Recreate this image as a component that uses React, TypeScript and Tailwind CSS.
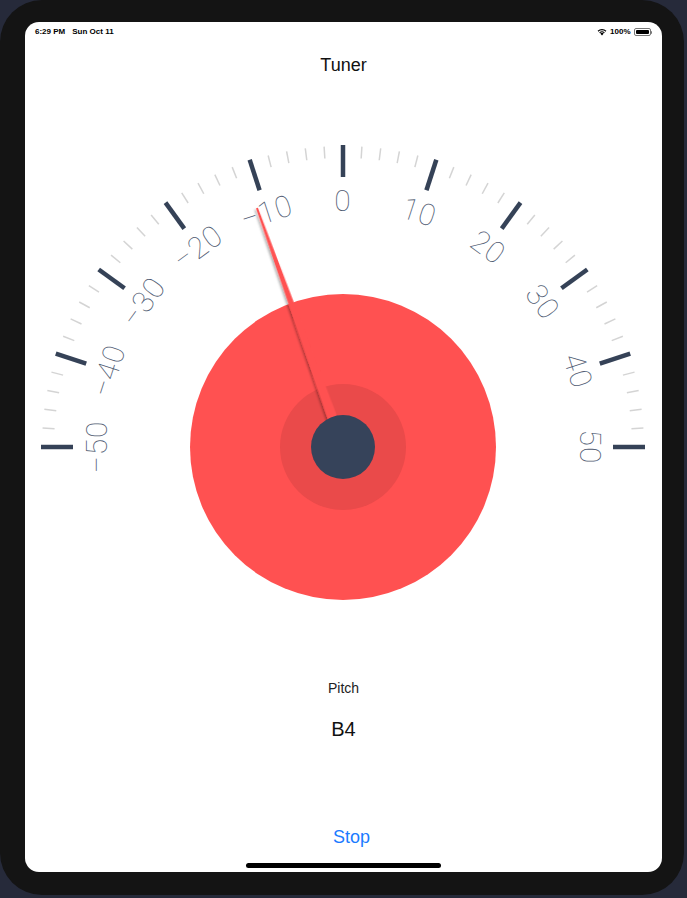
const CX = 318;
const CY = 317;

const polar = (r: number, deg: number) => {
  const a = (deg * Math.PI) / 180;
  return { x: CX + r * Math.sin(a), y: CY - r * Math.cos(a) };
};

const Gauge = ({ cents }: { cents: number }) => {
  const ticks = [];
  const labels = [];
  for (let v = -50; v <= 50; v += 2) {
    const major = v % 10 === 0;
    const deg = v * 1.8;
    const a = polar(major ? 270 : 289, deg);
    const b = polar(major ? 302 : 301, deg);
    ticks.push(
      <line
        key={v}
        x1={a.x}
        y1={a.y}
        x2={b.x}
        y2={b.y}
        stroke={major ? "#354257" : "#d4d4d4"}
        strokeWidth={major ? 4.5 : 1.5}
      />
    );
    if (major) {
      const p = polar(247, deg);
      labels.push(
        <text
          key={v}
          transform={`translate(${p.x} ${p.y}) rotate(${deg})`}
          textAnchor="middle"
          dominantBaseline="central"
          fontSize={30}
          fontWeight={100}
          letterSpacing={1}
          fill="#4f5b72"
          style={{ fontFamily: "Roboto, 'Liberation Sans', sans-serif" }}
        >
          {v < 0 ? `\u2212${-v}` : v}
        </text>
      );
    }
  }
  const angle = cents * 1.8;

  return (
    <svg width={637} height={480} viewBox="0 0 637 480" className="block">
      <defs>
        <filter id="needleShadow" x="-50%" y="-10%" width="200%" height="120%">
          <feDropShadow dx={-2} dy={1} stdDeviation={1} floodColor="#000" floodOpacity={0.3} />
        </filter>
      </defs>
      {ticks}
      {labels}
      <circle cx={CX} cy={CY} r={153} fill="#ff5151" />
      <circle cx={CX} cy={CY} r={63} fill="#ea4a4a" />
      <g transform={`rotate(${angle} ${CX} ${CY})`} filter="url(#needleShadow)">
        <polygon
          points={`${CX - 5.5},${CY + 4} ${CX + 5.5},${CY + 4} ${CX + 1},${CY - 254} ${CX - 1},${CY - 254}`}
          fill="#ff5151"
        />
      </g>
      <circle cx={CX} cy={CY} r={32} fill="#36435a" />
    </svg>
  );
};

const StatusBar = () => (
  <div className="flex h-[20px] items-center justify-between px-[10px] text-[8px] font-semibold text-black">
    <div className="flex gap-[7px]">
      <span>6:29 PM</span>
      <span>Sun Oct 11</span>
    </div>
    <div className="flex items-center gap-[3px]">
      <svg width="10" height="8" viewBox="0 0 10 8">
        <path d="M5 7.6 L3.3 5.6 A2.6 2.6 0 0 1 6.7 5.6 Z" fill="#000" />
        <path d="M2.2 4.4 A4.2 4.2 0 0 1 7.8 4.4 L7 5.2 A3.1 3.1 0 0 0 3 5.2 Z" fill="#000" />
        <path d="M0.6 2.8 A6.5 6.5 0 0 1 9.4 2.8 L8.6 3.7 A5.3 5.3 0 0 0 1.4 3.7 Z" fill="#000" />
      </svg>
      <span>100%</span>
      <div className="flex items-center">
        <div className="h-[8px] w-[17px] rounded-[2px] border border-[#777] p-[1px]">
          <div className="h-full w-full rounded-[1px] bg-black" />
        </div>
        <div className="h-[3px] w-[1.5px] rounded-r-sm bg-[#777]" />
      </div>
    </div>
  </div>
);

export default function App() {
  return (
    <div
      className="h-[898px] w-[687px] overflow-hidden bg-[#262a3a]"
      style={{ fontFamily: "'Liberation Sans', Arial, sans-serif" }}
    >
      <div className="h-[895px] w-[684px] rounded-[42px] bg-[#141414] pl-[25px] pt-[22px]">
        <div className="flex h-[850px] w-[637px] flex-col items-center overflow-hidden rounded-[14px] bg-white">
          <div className="w-full">
            <StatusBar />
          </div>
          <h1 className="mt-[11px] text-[18px] leading-[24px] text-[#111]">Tuner</h1>
          <div className="mt-[53px]">
            <Gauge cents={-11} />
          </div>
          <div className="mt-[69px] text-[14px] leading-[18px] text-[#222]">Pitch</div>
          <div className="mt-[20px] text-[20px] leading-[24px] text-[#111]">B4</div>
          <button className="ml-[16px] mt-[84px] text-[18px] leading-[24px] text-[#1b7bff]">Stop</button>
          <div className="mt-[14px] h-[5px] w-[195px] rounded-full bg-black" />
        </div>
      </div>
    </div>
  );
}
